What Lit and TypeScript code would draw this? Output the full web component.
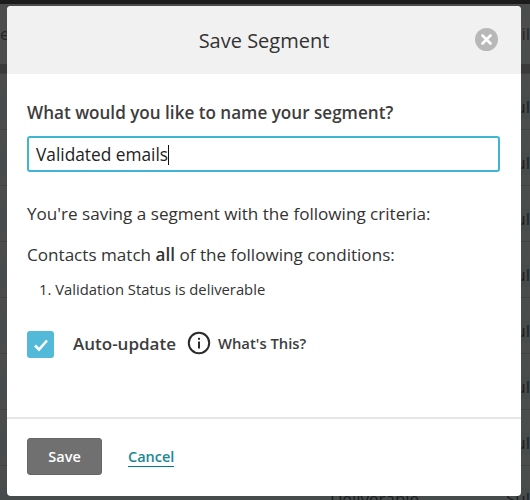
import { LitElement, html, css } from "lit";
import { customElement } from "lit/decorators.js";

@customElement("app-root")
export class AppRoot extends LitElement {
  static styles = css`
    :host {
      display: block;
      width: 530px;
      height: 500px;
      font-family: "Open Sans", "DejaVu Sans", sans-serif;
      color: #333;
      position: relative;
      overflow: hidden;
      background: #4b4c4c;
    }
    .backdrop {
      display: flex;
      flex-direction: column;
      height: 500px;
      color: #1d1d1d;
      font-size: 17px;
      line-height: 20px;
      overflow: hidden;
    }
    .topbar { height: 4px; background: #1c1c1c; flex: none; }
    .hrow {
      height: 60px;
      flex: none;
      display: flex;
      justify-content: space-between;
      align-items: center;
      color: #262626;
    }
    .band { height: 10px; flex: none; background: #3a3a3a; border-bottom: 1px solid #404040; box-sizing: border-box; }
    .row {
      height: 56px;
      flex: none;
      box-sizing: border-box;
      border-bottom: 1px solid #424343;
      display: flex;
      align-items: center;
      padding-top: 10px;
    }
    .cell {
      flex: 1;
      height: 24px;
      background: #464c4c;
      display: flex;
      justify-content: flex-end;
      align-items: center;
    }
    .last { justify-content: space-between; padding-left: 330px; }
    .modal {
      position: absolute;
      left: 7px;
      top: 6px;
      width: 514px;
      height: 490px;
      background: #fff;
      border-radius: 4px;
      overflow: hidden;
      display: flex;
      flex-direction: column;
    }
    .head {
      height: 68px;
      background: #f1f1f1;
      display: flex;
      align-items: center;
      justify-content: center;
      position: relative;
      font-size: 20px;
      flex: none;
    }
    .close {
      position: absolute;
      right: 23px;
      top: 22px;
      width: 23px;
      height: 23px;
    }
    .body {
      flex: 1;
      padding: 0 21px 0 20px;
      display: flex;
      flex-direction: column;
    }
    .q {
      font-size: 17.1px;
      font-weight: 600;
      line-height: 24px;
      margin-top: 27px;
      color: #3d3d3d;
    }
    .input {
      margin-top: 11px;
      height: 36px;
      box-sizing: border-box;
      border: 2px solid #3eb6d3;
      border-radius: 3px;
      display: flex;
      align-items: center;
      padding-left: 7px;
      padding-top: 1px;
      font-size: 17.3px;
      color: #222;
    }
    .caret { width: 1px; height: 20px; background: #111; }
    .p { font-size: 17.1px; line-height: 24px; }
    .p1 { margin-top: 30px; }
    .p2 { margin-top: 17px; }
    .p strong { font-weight: 600; }
    .li { font-size: 14.8px; line-height: 20px; margin-top: 12px; padding-left: 12px; }
    .auto { display: flex; align-items: center; margin-top: 32px; }
    .check {
      width: 27px;
      height: 27px;
      background: #52bad8;
      border-radius: 3px;
      display: flex;
      align-items: center;
      justify-content: center;
      flex: none;
    }
    .auto-label { font-size: 17px; font-weight: 600; margin-left: 19px; padding-bottom: 3px; color: #3d3d3d; }
    .info { width: 24px; height: 24px; margin-left: 11px; flex: none; margin-bottom: 3px; }
    .whats { font-size: 14.8px; font-weight: 600; margin-left: 7px; padding-bottom: 3px; color: #3d3d3d; }
    .foot {
      height: 79px;
      border-top: 2px solid #e6e6e6;
      box-sizing: border-box;
      flex: none;
      display: flex;
      align-items: center;
      padding-left: 20px;
      padding-bottom: 3px;
    }
    .save {
      width: 75px;
      height: 37px;
      box-sizing: border-box;
      background: #707070;
      border: 1px solid #666;
      border-radius: 3px;
      color: #fff;
      font: 600 14.5px "Open Sans", sans-serif;
      padding: 0;
    }
    .cancel {
      margin-left: 26px;
      margin-top: 2px;
      font-size: 14.5px;
      font-weight: 600;
      color: #1a8794;
      border-bottom: 1px solid #007c89;
      line-height: 19px;
    }
  `;

  render() {
    return html`
      <div class="backdrop">
        <div class="topbar"></div>
        <div class="hrow"><span>e</span><span>il</span></div>
        <div class="band"></div>
        ${[0, 1, 2, 3, 4, 5, 6].map(
          () => html`<div class="row"><div class="cell"><span>ul</span></div></div>`
        )}
        <div class="row"><div class="cell last"><span>Deliverable</span><span>Sul</span></div></div>
      </div>
      <div class="modal">
        <div class="head">
          Save Segment
          <svg class="close" viewBox="0 0 23 23">
            <circle cx="11.5" cy="11.5" r="11.5" fill="#b8b8b8" />
            <path d="M7.5 7.5l8 8M15.5 7.5l-8 8" stroke="#fff" stroke-width="2.6" stroke-linecap="round" />
          </svg>
        </div>
        <div class="body">
          <div class="q">What would you like to name your segment?</div>
          <div class="input">Validated emails<span class="caret"></span></div>
          <div class="p p1">You're saving a segment with the following criteria:</div>
          <div class="p p2">Contacts match <strong>all</strong> of the following conditions:</div>
          <div class="li">1. Validation Status is deliverable</div>
          <div class="auto">
            <div class="check">
              <svg width="16" height="14" viewBox="0 0 16 14">
                <path d="M2 7.5l4 4 8-9" fill="none" stroke="#fff" stroke-width="2.6" />
              </svg>
            </div>
            <span class="auto-label">Auto-update</span>
            <svg class="info" viewBox="0 0 24 24">
              <circle cx="12" cy="12" r="10.2" fill="none" stroke="#2b2b2b" stroke-width="2" />
              <rect x="11" y="10.5" width="2" height="7" fill="#2b2b2b" />
              <rect x="11" y="6.8" width="2" height="2" fill="#2b2b2b" />
            </svg>
            <span class="whats">What's This?</span>
          </div>
        </div>
        <div class="foot">
          <button class="save">Save</button>
          <span class="cancel">Cancel</span>
        </div>
      </div>
    `;
  }
}
